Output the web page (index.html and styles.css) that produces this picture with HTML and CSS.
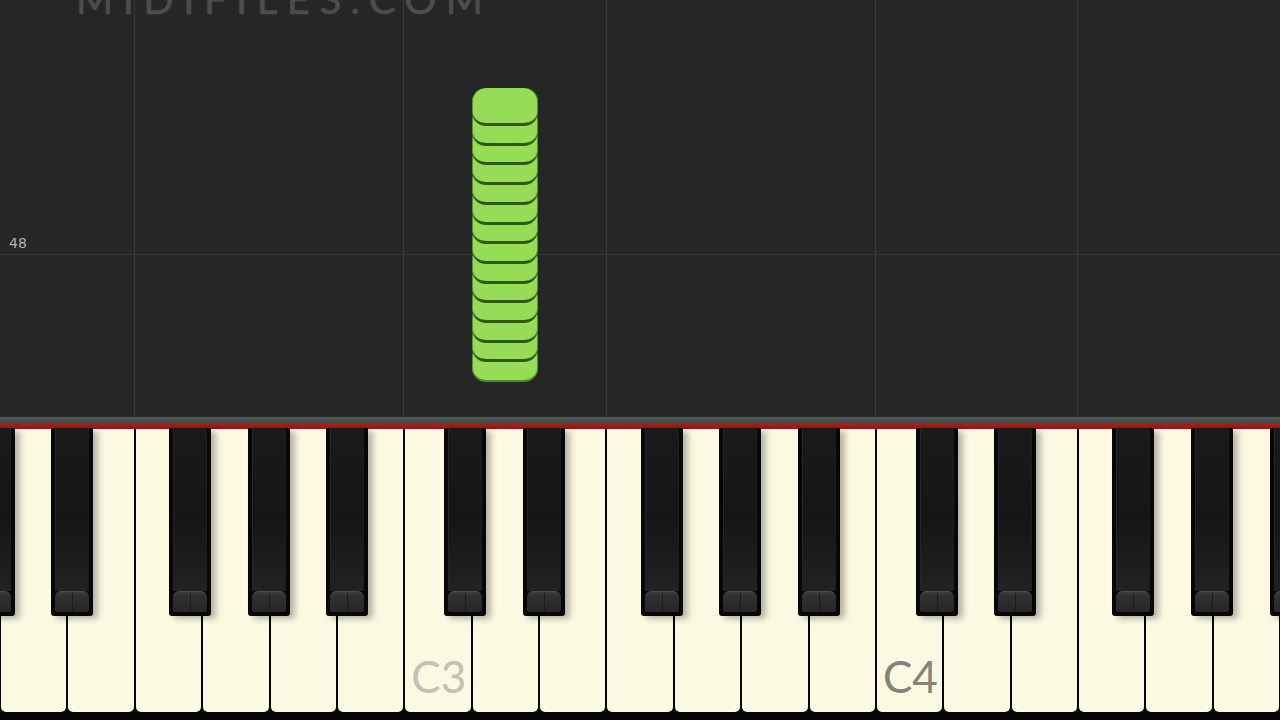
FILE: index.html
```html
<!DOCTYPE html>
<html lang="en">
<head>
<meta charset="utf-8">
<title>Piano roll</title>
<link rel="stylesheet" href="styles.css">
</head>
<body>
<div class="app">
  <div class="roll">
    <div class="vline" style="left:134px"></div>
    <div class="vline" style="left:403px"></div>
    <div class="vline" style="left:606px"></div>
    <div class="vline" style="left:875px"></div>
    <div class="vline" style="left:1077px"></div>
    <div class="hline" style="top:254px"></div>
    <div class="watermark">MIDIFILES.COM</div>
    <div class="row-label" style="top:235px">48</div>
    <div class="notes" style="left:472px; top:88px">
      <div class="note"></div><div class="note"></div><div class="note"></div><div class="note"></div>
      <div class="note"></div><div class="note"></div><div class="note"></div><div class="note"></div>
      <div class="note"></div><div class="note"></div><div class="note"></div><div class="note"></div>
      <div class="note"></div><div class="note"></div>
    </div>
  </div>
  <div class="rail"></div>
  <div class="redline"></div>
  <div class="keyboard">
    <div class="whites">
      <div class="wk"></div><div class="wk"></div><div class="wk"></div><div class="wk"></div>
      <div class="wk"></div><div class="wk"></div>
      <div class="wk"><span class="klabel light">C3</span></div>
      <div class="wk"></div><div class="wk"></div><div class="wk"></div><div class="wk"></div>
      <div class="wk"></div><div class="wk"></div>
      <div class="wk"><span class="klabel">C4</span></div>
      <div class="wk"></div><div class="wk"></div><div class="wk"></div><div class="wk"></div>
      <div class="wk"></div>
    </div>
    <div class="bk" style="left:-27px"><div class="bk-body"></div><div class="bk-lip"></div></div>
    <div class="bk" style="left:51px"><div class="bk-body"></div><div class="bk-lip"></div></div>
    <div class="bk" style="left:169px"><div class="bk-body"></div><div class="bk-lip"></div></div>
    <div class="bk" style="left:248px"><div class="bk-body"></div><div class="bk-lip"></div></div>
    <div class="bk" style="left:326px"><div class="bk-body"></div><div class="bk-lip"></div></div>
    <div class="bk" style="left:444px"><div class="bk-body"></div><div class="bk-lip"></div></div>
    <div class="bk" style="left:523px"><div class="bk-body"></div><div class="bk-lip"></div></div>
    <div class="bk" style="left:641px"><div class="bk-body"></div><div class="bk-lip"></div></div>
    <div class="bk" style="left:719px"><div class="bk-body"></div><div class="bk-lip"></div></div>
    <div class="bk" style="left:798px"><div class="bk-body"></div><div class="bk-lip"></div></div>
    <div class="bk" style="left:916px"><div class="bk-body"></div><div class="bk-lip"></div></div>
    <div class="bk" style="left:994px"><div class="bk-body"></div><div class="bk-lip"></div></div>
    <div class="bk" style="left:1112px"><div class="bk-body"></div><div class="bk-lip"></div></div>
    <div class="bk" style="left:1191px"><div class="bk-body"></div><div class="bk-lip"></div></div>
    <div class="bk" style="left:1270px"><div class="bk-body"></div><div class="bk-lip"></div></div>
  </div>
</div>
</body>
</html>
```
FILE: styles.css
```css
* { box-sizing: border-box; }
html, body { margin: 0; padding: 0; }
body {
  width: 1280px;
  height: 720px;
  overflow: hidden;
  background: #262626;
  font-family: "Lato", "DejaVu Sans", sans-serif;
}
.app {
  display: flex;
  flex-direction: column;
  width: 1280px;
  height: 720px;
}
.roll {
  position: relative;
  height: 417px;
  flex: none;
  background: #262626;
  overflow: hidden;
}
.vline {
  position: absolute;
  top: 0;
  bottom: 0;
  width: 1px;
  background: #393939;
}
.hline {
  position: absolute;
  left: 0;
  right: 0;
  height: 1px;
  background: #363636;
}
.watermark {
  position: absolute;
  left: 76px;
  top: -21px;
  font-family: "Lato", sans-serif;
  font-size: 40px;
  line-height: 40px;
  letter-spacing: 9.5px;
  color: #4d4d4d;
  -webkit-text-stroke: 0.6px #4d4d4d;
  white-space: nowrap;
}
.row-label {
  position: absolute;
  left: 9px;
  font-family: "DejaVu Sans", sans-serif;
  font-size: 14px;
  line-height: 16px;
  color: #b2b2b2;
}
.notes {
  position: absolute;
  width: 66px;
  display: flex;
  flex-direction: column;
}
.note {
  position: relative;
  height: 38px;
  flex: none;
  background: #97dc56;
  border-radius: 14px;
  border-bottom: 3px solid #2f5811;
  box-shadow: inset 1px 0 0 rgba(50, 95, 20, 0.6), inset -1px 0 0 rgba(50, 95, 20, 0.6);
}
.note + .note { margin-top: -18.3px; }
.note:nth-child(1) { z-index: 14; }
.note:nth-child(2) { z-index: 13; }
.note:nth-child(3) { z-index: 12; }
.note:nth-child(4) { z-index: 11; }
.note:nth-child(5) { z-index: 10; }
.note:nth-child(6) { z-index: 9; }
.note:nth-child(7) { z-index: 8; }
.note:nth-child(8) { z-index: 7; }
.note:nth-child(9) { z-index: 6; }
.note:nth-child(10) { z-index: 5; }
.note:nth-child(11) { z-index: 4; }
.note:nth-child(12) { z-index: 3; }
.note:nth-child(13) { z-index: 2; }
.note:nth-child(14) { z-index: 1; border-bottom: 2px solid #4f8a26; }
.rail {
  height: 6px;
  flex: none;
  background: linear-gradient(#585858, #454545);
}
.redline {
  height: 6px;
  flex: none;
  background: linear-gradient(#b01e1e, #921616);
}
.keyboard {
  position: relative;
  flex: 1;
  background: #050505;
}
.whites {
  display: flex;
  height: 283px;
}
.wk {
  flex: 1;
  margin: 0 1px;
  background: #fcf9e3;
  border-radius: 0 0 5px 5px;
  display: flex;
  align-items: flex-end;
  padding: 0 0 14px 6px;
}
.klabel {
  font-family: "Lato", sans-serif;
  font-size: 44px;
  line-height: 44px;
  color: #86847a;
}
.klabel.light {
  color: #c4c1b0;
}
.bk {
  position: absolute;
  top: -1px;
  width: 42px;
  height: 188px;
  background: #070707;
  border-radius: 1px 1px 3px 3px;
  padding: 0 4px 4px;
  display: flex;
  flex-direction: column;
  box-shadow: 5px 3px 6px rgba(0, 0, 0, 0.28);
}
.bk-body {
  flex: 1;
  background: linear-gradient(to bottom, #1a1a1a 0%, #151515 55%, #222 100%);
  box-shadow: inset 1px 0 0 #262626, inset -1px 0 0 #1e1e1e;
}
.bk-lip {
  position: relative;
  height: 21px;
  flex: none;
  border-radius: 6px 6px 2px 2px;
  background: linear-gradient(#555 0, #3c3c3c 1.5px, #303030 5px, #262626 100%);
}
.bk-lip::after {
  content: "";
  position: absolute;
  left: 50%;
  top: 2px;
  bottom: 0;
  width: 1px;
  background: #1c1c1c;
}
```
